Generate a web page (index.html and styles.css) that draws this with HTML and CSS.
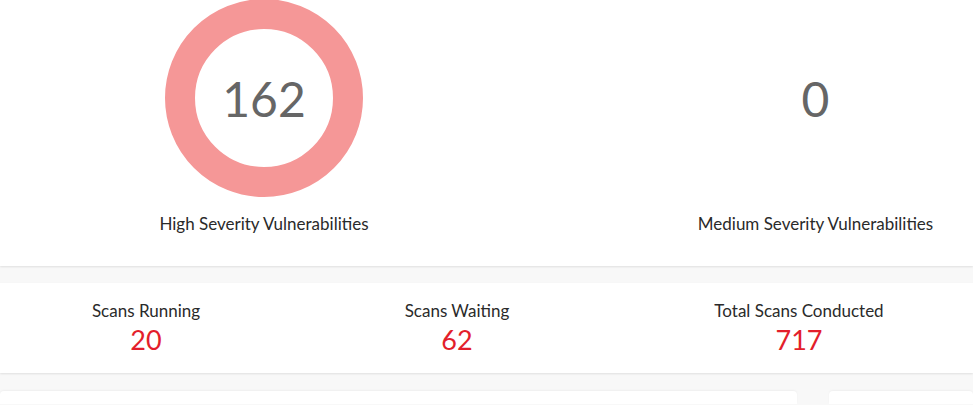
FILE: index.html
```html
<!DOCTYPE html>
<html>
<head lang="en">
    <meta charset="UTF-8">
    <title>Dashboard</title>
    <link rel="stylesheet" href="styles.css">
</head>
<body>
    <div class="panel severity">
        <div class="sev sev_high">
            <div class="ring ring_high">162</div>
            <div class="sev_label">High Severity Vulnerabilities</div>
        </div>
        <div class="sev sev_medium">
            <div class="ring">0</div>
            <div class="sev_label">Medium Severity Vulnerabilities</div>
        </div>
    </div>

    <div class="panel scans">
        <div class="scan scan_running">
            <div class="scan_label">Scans Running</div>
            <div class="scan_num">20</div>
        </div>
        <div class="scan scan_waiting">
            <div class="scan_label">Scans Waiting</div>
            <div class="scan_num">62</div>
        </div>
        <div class="scan scan_total">
            <div class="scan_label">Total Scans Conducted</div>
            <div class="scan_num">717</div>
        </div>
    </div>

    <div class="bottom">
        <div class="box box_main"></div>
        <div class="box box_side"></div>
    </div>
</body>
</html>
```

FILE: styles.css
```css
body {
    margin: 0;
    background: #f8f8f8;
    font-family: "Lato", "Liberation Sans", sans-serif;
    color: #2a2a2a;
    overflow: hidden;
    width: 973px;
    height: 405px;
}

.panel {
    background: #fff;
    box-shadow: 0 1px 2px rgba(0, 0, 0, 0.1);
    display: flex;
}

.severity {
    height: 266px;
}

.sev {
    display: flex;
    flex-direction: column;
    align-items: center;
}

.sev_high {
    width: 528px;
    flex: none;
}

.sev_medium {
    flex: 1;
    padding-left: 130px;
}

.ring {
    width: 198px;
    height: 198px;
    margin-top: -1px;
    box-sizing: border-box;
    border: 30px solid transparent;
    border-radius: 50%;
    display: flex;
    align-items: center;
    justify-content: center;
    font-size: 48px;
    color: #666;
}

.ring_high {
    border-color: #f59797;
}

.sev_label {
    margin-top: 17px;
    font-size: 17px;
    line-height: 20px;
}

.scans {
    margin-top: 17px;
    height: 90px;
    padding-top: 17px;
    box-sizing: border-box;
}

.scan {
    text-align: center;
}

.scan_running {
    width: 292px;
    flex: none;
}

.scan_waiting {
    width: 330px;
    flex: none;
}

.scan_total {
    flex: 1;
    padding-left: 3px;
}

.scan_label {
    font-size: 17px;
    line-height: 22px;
}

.scan_num {
    font-size: 27px;
    line-height: 36px;
    color: #e31e2b;
}

.bottom {
    display: flex;
    gap: 32px;
    margin-top: 18px;
}

.box {
    background: #fff;
    height: 13px;
    border-radius: 4px 4px 0 0;
    box-shadow: 0 -1px 2px rgba(0, 0, 0, 0.04);
}

.box_main {
    width: 797px;
    flex: none;
}

.box_side {
    flex: 1;
}
```
